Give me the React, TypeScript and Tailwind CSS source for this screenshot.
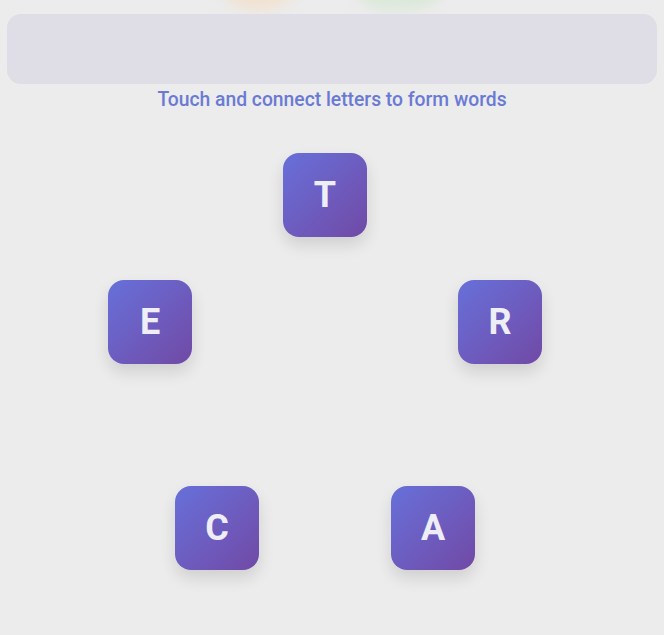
const letters = [
  { ch: "T", x: 325, y: 195 },
  { ch: "R", x: 500, y: 322 },
  { ch: "A", x: 433, y: 528 },
  { ch: "C", x: 217, y: 528 },
  { ch: "E", x: 150, y: 322 },
];

function Tile({ ch, x, y }: { ch: string; x: number; y: number }) {
  return (
    <div
      className="absolute flex h-[84px] w-[84px] -translate-x-1/2 -translate-y-1/2 items-center justify-center rounded-[16px] bg-gradient-to-br from-[#6670da] to-[#7049a6] shadow-[0_8px_16px_rgba(0,0,0,0.12)]"
      style={{ left: x, top: y }}
    >
      <span className="text-[36px] font-bold leading-none text-[#eeeef6]">{ch}</span>
    </div>
  );
}

export default function App() {
  return (
    <div className="relative h-[635px] w-[664px] overflow-hidden bg-[#ececec] font-['Roboto',sans-serif]">
      {/* faded blobs peeking from the top */}
      <div className="absolute left-[212px] top-[-78px] h-[88px] w-[92px] rounded-full bg-[#f1e2cf] blur-[6px]" />
      <div className="absolute left-[345px] top-[-80px] h-[90px] w-[108px] rounded-full bg-[#dbe8d8] blur-[6px]" />

      <div className="relative flex flex-col items-center px-[7px] pt-[14px]">
        <div className="h-[70px] w-full rounded-[14px] bg-[#dfdde6]" />
        <p className="mt-[4px] text-[19.3px] font-medium leading-[24px] text-[#6a7ad4]">
          Touch and connect letters to form words
        </p>
      </div>

      {letters.map((l) => (
        <Tile key={l.ch} {...l} />
      ))}
    </div>
  );
}
